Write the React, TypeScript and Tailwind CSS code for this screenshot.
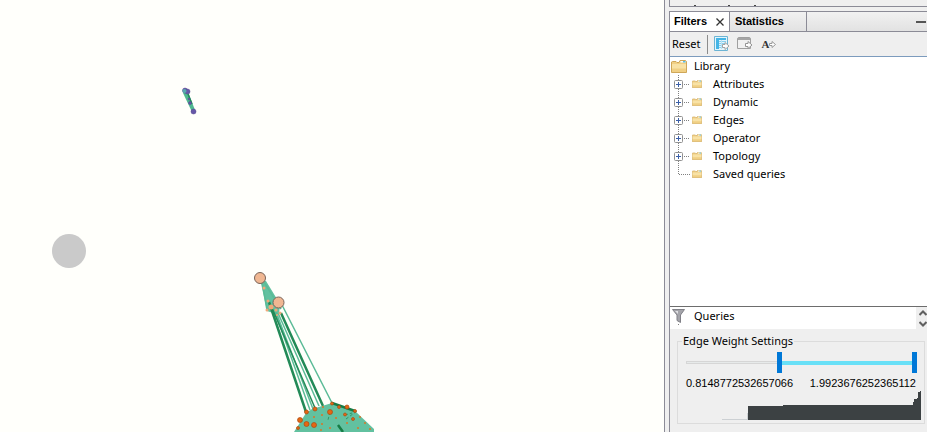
import React, { useState } from 'react';

const tree = ['Attributes', 'Dynamic', 'Edges', 'Operator', 'Topology', 'Saved queries'];

function Folder({ className }: { className: string }) {
  return (
    <svg viewBox="0 0 16 13" preserveAspectRatio="none" className={className} aria-hidden="true">
      <path d="M.5 2V12.500H15.500V1.500L14.500.5H9L8 2.500H6L5 1.500H1.500Z" fill="#f0cf84" stroke="#cfa759" />
      <path d="M1 4H15V8.500H1Z" fill="#f8e2a6" />
      <path d="M9.500 1H14.500V2.500H9.500Z" fill="#f7fbfd" />
      <path d="M12 1H14.500V2.500H12Z" fill="#58bfe8" />
    </svg>
  );
}

function ExportTable() {
  return (
    <svg viewBox="0 0 16 16" className="size-4" aria-hidden="true">
      <path d="M.5.5H13.500V14.500H.5Z" fill="#e4f5fc" stroke="#6cb4d4" />
      <path d="M2 2H12V4H2ZM2 4H5V13H2Z" fill="#45b5e6" />
      <path d="M5 5.500H12M5 7.500H12M5 9.500H12M5 11.500H12" stroke="#86cfee" />
      <path d="M7.500 4V13" stroke="#b9e2f4" />
      <path d="M8.500 8.500H11V6.500L15 10L11 13.500V11.500H8.500Z" fill="#fff" stroke="#a3a3a3" />
    </svg>
  );
}

function ExportWindow() {
  return (
    <svg viewBox="0 0 16 16" className="size-4" aria-hidden="true">
      <path d="M.5 3Q.5 1.500 2 1.500H12Q13.500 1.500 13.500 3V12.500H.5Z" fill="#f1f1f1" stroke="#a0a0a0" />
      <path d="M1 2H13V4H1Z" fill="#a6a6a6" />
      <path d="M8.500 7.500H11V5.500L15 9L11 12.500V10.500H8.500Z" fill="#fff" stroke="#959595" />
    </svg>
  );
}

function Network() {
  return (
    <svg width="664" height="432" className="block" role="img" aria-label="Network graph">
      <circle cx="69" cy="251" r="17" fill="#cacaca" />
      <path d="M183 93L192 112L195 110L188 92Z" fill="#4fb890" />
      <path d="M188 94L192 104" stroke="#1f8a58" strokeWidth="1.500" />
      <g fill="#6657a8" stroke="#54478f" strokeWidth=".5">
        <circle cx="185" cy="90.500" r="2.500" />
        <circle cx="187.500" cy="91.500" r="2.500" />
        <circle cx="189" cy="99" r="1" />
        <circle cx="190" cy="103" r="1.500" />
        <circle cx="193.500" cy="111.500" r="2.500" />
      </g>
      <circle cx="184.500" cy="91" r="2" fill="#58aab0" />

      <path d="M260 279L266 281L280 304L279 315L267 311L264 297Z" fill="#62c1a0" />
      <g fill="none" stroke="#5bbb97" strokeWidth="1.500">
        <path d="M262 281L267 310M281 303L332 403M275 312L310 410M276 312L313 409M278 313L319 406M262 279L281 309" />
      </g>
      <g fill="none" stroke="#238a57" strokeWidth="2.500">
        <path d="M269 302L306 412M281 313L323 406" />
        <path d="M272 308L315 408" strokeWidth="1.500" />
      </g>
      <path d="M294 432L306 413L312 409L332 403L355 411L374 429V432Z" fill="#62c1a0" />
      <path d="M332 403L355 411M338 425L343 432" stroke="#157c46" strokeWidth="2.500" />
      <path d="M346 419L357 411M330 412L328 420M345 415L352 413" stroke="#2e9868" strokeDasharray="3 2" />
      <g fill="#f0a878">
        <circle cx="264" cy="288" r="1.500" />
        <circle cx="268" cy="301" r="1.500" />
        <circle cx="271" cy="307" r="2.500" />
        <circle cx="267" cy="310" r="1.500" />
        <circle cx="276" cy="310" r="1.500" />
        <circle cx="280" cy="313" r="1.500" />
        <circle cx="277" cy="315" r="1" />
      </g>
      <g fill="#f0b792" stroke="#796459">
        <circle cx="260" cy="278" r="5.500" />
        <circle cx="278.500" cy="302.500" r="5.500" />
      </g>
      <g fill="#e66712" stroke="#a94b12" strokeWidth=".7">
        <circle cx="300" cy="420" r="2.500" />
        <circle cx="306.500" cy="424" r="2.500" />
        <circle cx="314" cy="425" r="2.500" />
        <circle cx="330" cy="412" r="2.500" />
        <circle cx="306.500" cy="412" r="2" />
        <circle cx="315" cy="409" r="2" />
        <circle cx="298" cy="428" r="1.500" />
        <circle cx="332" cy="403.500" r="1.500" />
        <circle cx="339" cy="407" r="1.500" />
        <circle cx="347" cy="407" r="2" />
        <circle cx="355" cy="411" r="1.500" />
        <circle cx="345" cy="414.500" r="1.500" />
        <circle cx="353" cy="419" r="1.500" />
      </g>
      <g fill="#d87428">
        <circle cx="322" cy="415" r="1" />
        <circle cx="323" cy="407" r="1" />
        <circle cx="322" cy="424" r="1" />
        <circle cx="314" cy="417" r="1" />
        <circle cx="336" cy="418" r="1" />
        <circle cx="330" cy="428" r="1" />
        <circle cx="347" cy="423" r="1" />
        <circle cx="360" cy="417" r="1" />
        <circle cx="365" cy="423" r="1" />
        <circle cx="358" cy="428" r="1" />
        <circle cx="370" cy="429" r="1" />
        <circle cx="321" cy="430" r="1" />
      </g>
    </svg>
  );
}

const thumb =
  'pointer-events-none col-start-1 row-start-1 m-0 h-[21px] w-full appearance-none bg-transparent [&::-webkit-slider-thumb]:pointer-events-auto [&::-webkit-slider-thumb]:h-[21px] [&::-webkit-slider-thumb]:w-[5px] [&::-webkit-slider-thumb]:appearance-none [&::-webkit-slider-thumb]:bg-[#0078d7]';

const MIN = 0.02;
const MAX = 1.9923676252365112;

function EdgeWeight() {
  const [low, setLow] = useState(0.8148772532657066);
  const [high, setHigh] = useState(MAX);
  const start = ((low - MIN) / (MAX - MIN)) * 100;
  const end = ((high - MIN) / (MAX - MIN)) * 100;
  return (
    <fieldset className="mr-[2px] mb-2 ml-[7px] min-w-0 border border-[#dcdcdc] pr-[7px] pb-[3px] pl-2">
      <legend className="-ml-1 px-px leading-4">Edge Weight Settings</legend>
      <div className="mt-[3px] grid items-center">
        <div className="col-start-1 row-start-1 h-[3px] border border-[#d6d6d6] bg-[#e7eaea]" />
        <div
          className="col-start-1 row-start-1 h-1 bg-[#68e0f7]"
          style={{ marginLeft: `${start}%`, marginRight: `${100 - end}%` }}
        />
        <input type="range" aria-label="Minimum edge weight" min={MIN} max={MAX} step="any" value={low} onChange={(e) => setLow(Math.min(+e.target.value, high))} className={thumb} />
        <input type="range" aria-label="Maximum edge weight" min={MIN} max={MAX} step="any" value={high} onChange={(e) => setHigh(Math.max(+e.target.value, low))} className={thumb} />
      </div>
      <div className="mt-[2px] flex justify-between pr-px font-['Liberation_Sans',sans-serif] leading-4">
        <output>{low}</output>
        <output>{high}</output>
      </div>
      <svg viewBox="0 0 236 29" className="-mr-1 block h-[29px] w-[236px]" role="img" aria-label="Edge weight distribution">
        <path d="M36 28.500H62" stroke="#ccd0d3" />
        <path d="M61.500 22V28" stroke="#ccd0d3" />
        <path d="M62 15H97V14H227V11H228V8H231V7H232V1H234V0H235V29H62Z" fill="#3c4143" />
      </svg>
    </fieldset>
  );
}

export default function App() {
  return (
    <div className="flex min-h-screen bg-[#efefef] font-['Noto_Sans','Liberation_Sans',sans-serif] text-[11px] text-black">
      <main className="max-h-screen min-w-0 flex-1 overflow-hidden bg-[#fffffb]">
        <Network />
      </main>
      <aside className="flex w-[263px] shrink-0 flex-col border-l border-[#8b8b96] pl-1">
        <div className="h-[7px] border-b border-l border-[#8b8b96]">
          <svg width="100" height="6" className="block" aria-hidden="true">
            <path d="M24 5.500H26M58 5.500H60M84 5.500H86" stroke="#444" />
          </svg>
        </div>
        <section className="mt-1 flex flex-1 flex-col border-t border-l border-[#8b8b96]">
          <div className="flex h-5 border-b border-[#8b8b96] bg-linear-to-b from-[#f1f1f1] to-[#e2e2e2] font-['Liberation_Sans',sans-serif] font-bold">
            <div className="flex w-[60px] items-center justify-between border-r border-[#8b8b96] bg-white pr-[5px] pl-1">
              <button>Filters</button>
              <button aria-label="Close Filters">
                <svg viewBox="0 0 8 8" className="size-2"><path d="M.5.5L7.500 7.500M7.500.5L.5 7.500" stroke="#333" strokeWidth="1.300" /></svg>
              </button>
            </div>
            <button className="w-[77px] border-r border-[#8b8b96] pl-[5px] text-left">Statistics</button>
            <button aria-label="Minimize" className="ml-auto flex w-[11px] items-center">
              <span className="h-[2px] w-[10px] bg-[#555]" />
            </button>
          </div>
          <div className="flex h-[25px] items-center border-b border-[#7c9bbd] pl-[2px]">
            <button>Reset</button>
            <span className="ml-[6px] h-[19px] w-px bg-[#8c8c8c]" />
            <button aria-label="Export column" className="ml-[6px]"><ExportTable /></button>
            <button aria-label="Export workspace" className="ml-[7px]"><ExportWindow /></button>
            <button aria-label="Export labels" className="ml-[9px] flex items-center">
              <span className="font-['Liberation_Serif',serif] font-bold text-[#333]">A</span>
              <svg viewBox="0 0 7 7" className="size-[7px]" aria-hidden="true">
                <path d="M.5 2.500H3V.5L6.500 3.500L3 6.500V4.500H.5Z" fill="#fff" stroke="#999" />
              </svg>
            </button>
          </div>
          <div role="tree" aria-label="Library" className="min-h-[249px] flex-1 bg-white">
            <div role="treeitem" className="flex h-[18px] items-center pl-[1px]">
              <Folder className="h-[13px] w-4" />
              <span className="ml-[7px]">Library</span>
            </div>
            {tree.map((name, i) => (
              <div role="treeitem" key={name} className="flex h-[18px] items-center pl-1">
                <svg viewBox="0 0 16 18" className="h-[18px] w-4" aria-hidden="true">
                  <path d={i < 5 ? 'M4.500 0V18M8 9.500H16' : 'M4.500 0V9.500H16'} fill="none" stroke="#808080" strokeDasharray="1 1" />
                  {i < 5 && (
                    <>
                      <rect x=".5" y="5.500" width="8" height="8" rx="1" fill="#fff" stroke="#919191" />
                      <path d="M2 9.500H7M4.500 7V12" stroke="#3b5fa8" />
                    </>
                  )}
                </svg>
                <Folder className="ml-[2px] h-2 w-[10px]" />
                <span className="ml-[11px]">{name}</span>
              </div>
            ))}
          </div>
          <div className="flex h-[23px] border-t border-[#6d6d6d]">
            <div className="flex flex-1 items-center bg-white pb-1 pl-[2px]">
              <svg viewBox="0 0 14 18" className="h-[18px] w-[14px]" aria-hidden="true">
                <path d="M.5 2.500H12.500L8.500 8V15.500L5 13.500V8Z" fill="#a4a4aa" stroke="#808087" />
                <path d="M3 4H6V7Z" fill="#e2e2e6" />
                <path d="M6.500 17V18" stroke="#808080" />
              </svg>
              <span className="ml-2">Queries</span>
            </div>
            <div className="flex w-[11px] flex-col items-end justify-center gap-[5px] overflow-hidden">
              <button aria-label="Scroll up"><svg viewBox="0 0 8 6" className="h-[6px] w-2"><path d="M.5 5L4 1.500L7.500 5" fill="none" stroke="#606060" strokeWidth="2" /></svg></button>
              <button aria-label="Scroll down"><svg viewBox="0 0 8 6" className="h-[6px] w-2"><path d="M.5 1L4 4.500L7.500 1" fill="none" stroke="#606060" strokeWidth="2" /></svg></button>
            </div>
          </div>
          <div className="pt-1"><EdgeWeight /></div>
        </section>
      </aside>
    </div>
  );
}
